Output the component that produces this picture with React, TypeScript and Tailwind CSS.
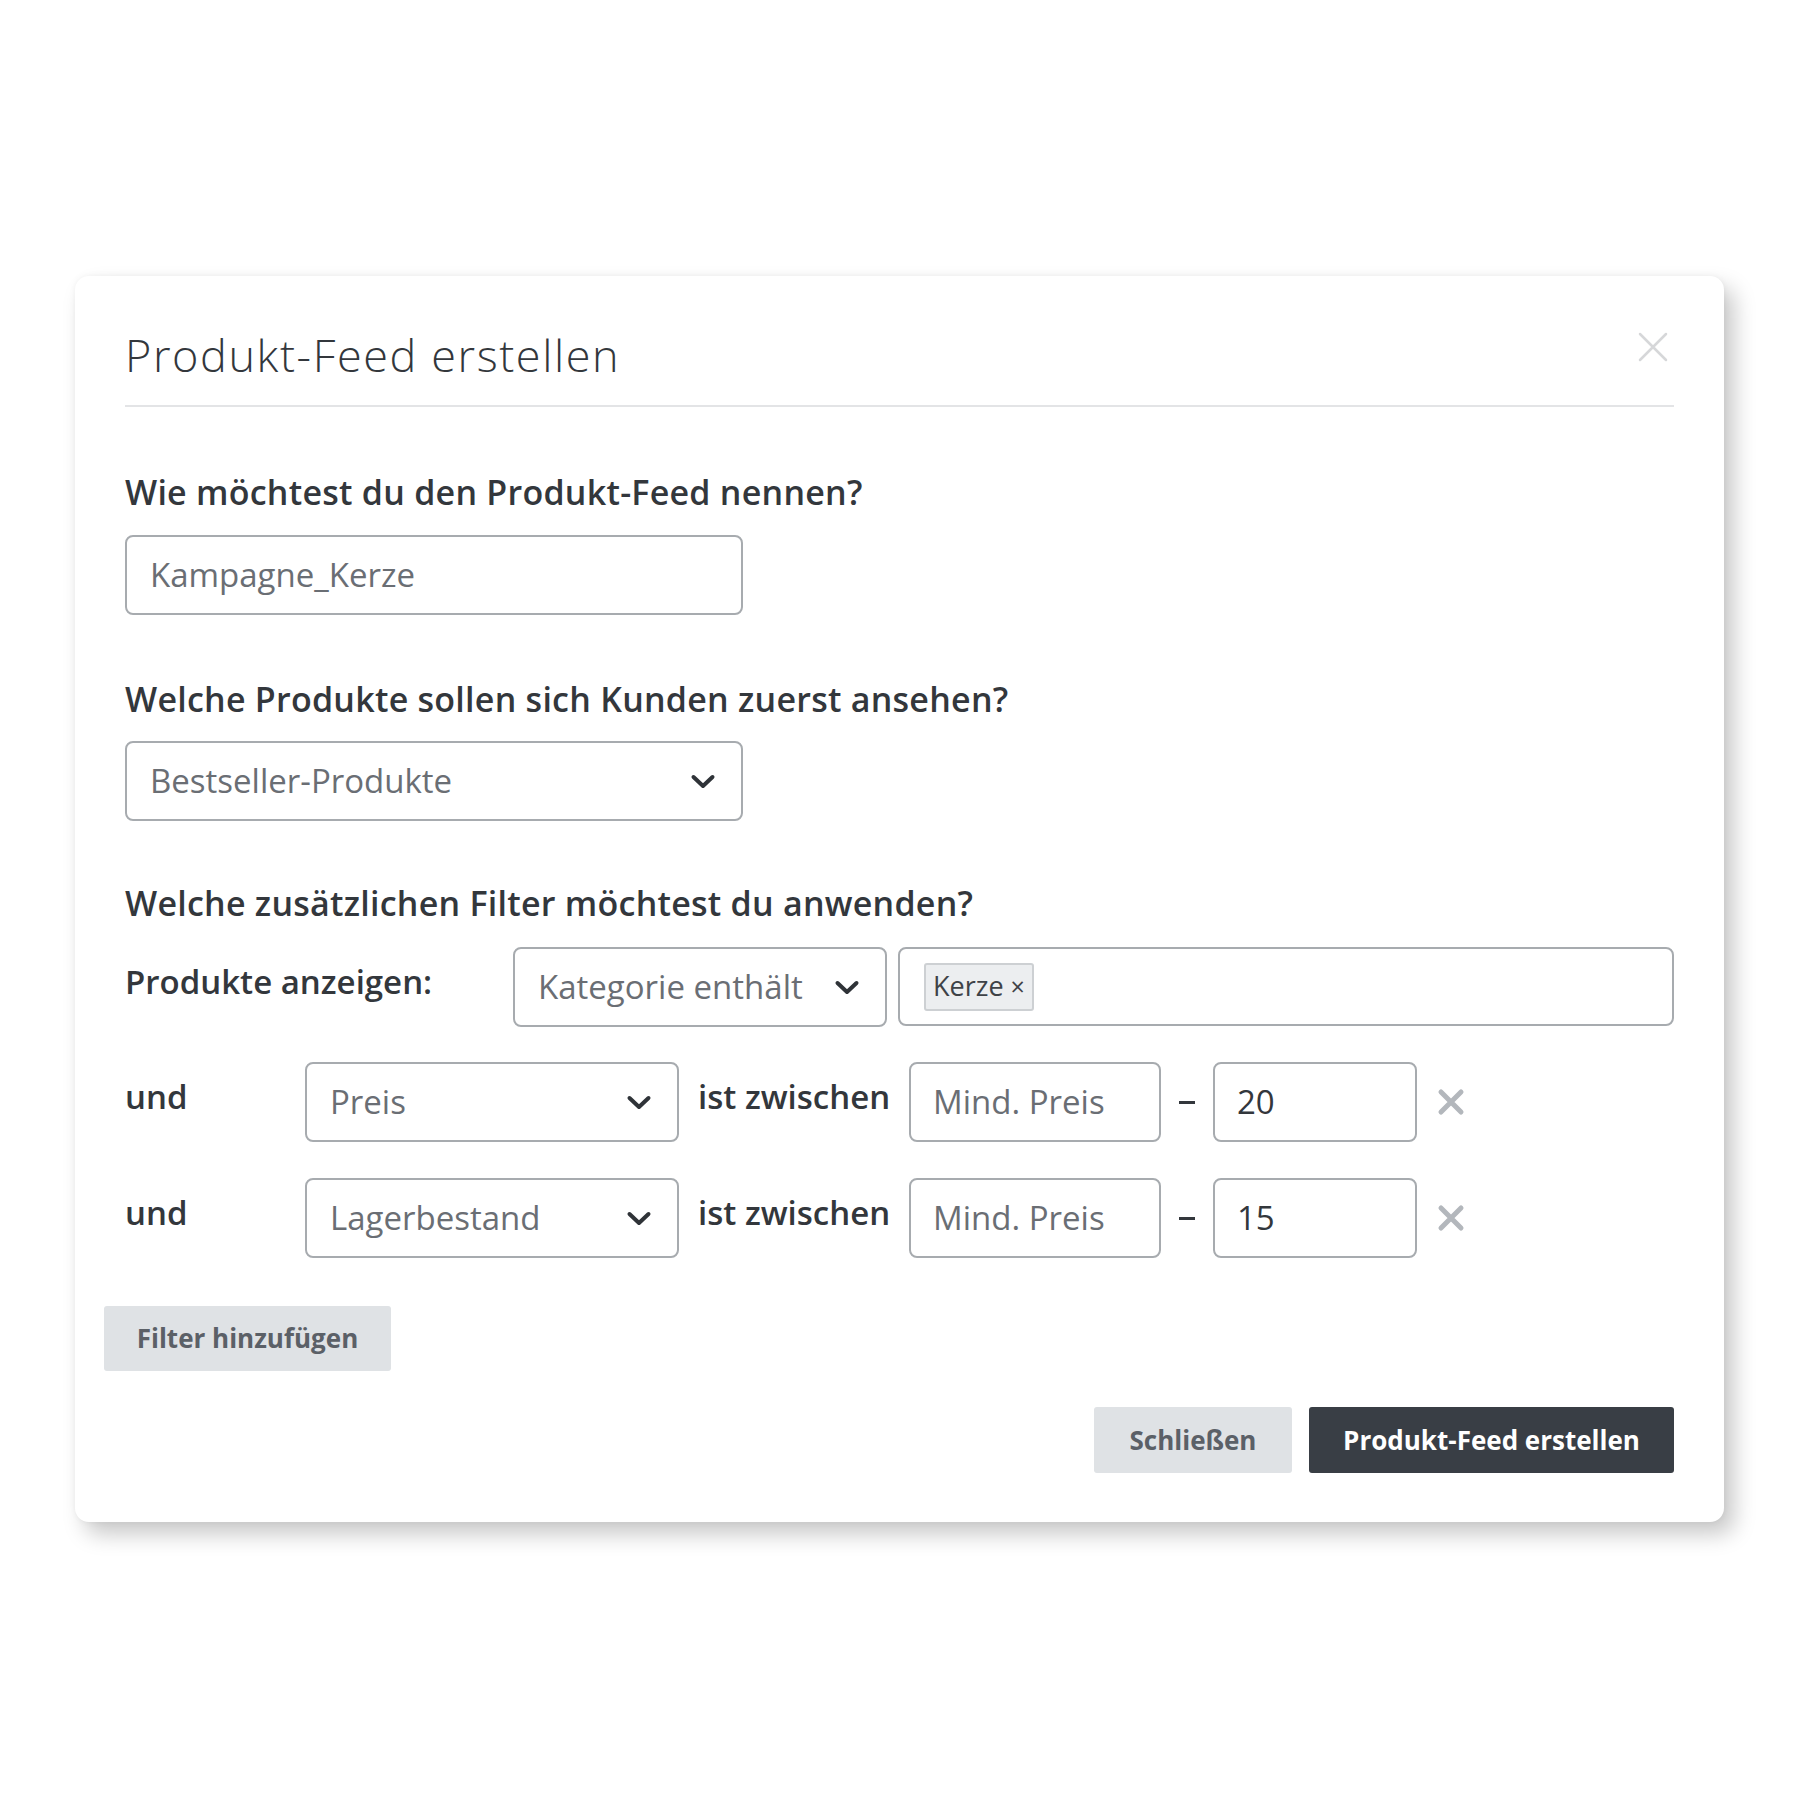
import { useState } from 'react';

const font = { fontFamily: '"Open Sans", Lato, sans-serif' };

function Chevron() {
  return (
    <svg width="26" height="16" viewBox="0 0 26 16" fill="none">
      <path d="M3.5 4l9.5 9 9.5-9" stroke="#2f3338" strokeWidth="4" strokeLinecap="round" strokeLinejoin="round" />
    </svg>
  );
}

function RemoveX() {
  return (
    <svg width="30" height="30" viewBox="0 0 30 30" fill="none">
      <path d="M5 5l20 20M25 5L5 25" stroke="#b3b7bc" strokeWidth="5" strokeLinecap="round" />
    </svg>
  );
}

function SelectBox({ value, width }: { value: string; width: string }) {
  return (
    <div className={`${width} h-[80px] shrink-0 flex items-center justify-between pl-[23px] pr-[25px] border-2 border-[#a7abaf] rounded-[8px] bg-white`}>
      <span className="text-[33px] text-[#6a6e74]">{value}</span>
      <Chevron />
    </div>
  );
}

function RangeRow({ field, max }: { field: string; max: string }) {
  return (
    <div className="flex items-center h-[80px]">
      <span className="w-[180px] text-[33px] font-semibold text-[#33373c] -mt-[10px]">und</span>
      <SelectBox value={field} width="w-[374px]" />
      <span className="ml-[19px] w-[196px] text-[33px] font-semibold text-[#33373c] -mt-[10px] whitespace-nowrap">ist zwischen</span>
      <div className="ml-[15px] w-[252px] h-[80px] flex items-center pl-[22px] border-2 border-[#a7abaf] rounded-[8px] text-[33px] text-[#6a6e74]">
        Mind. Preis
      </div>
      <div className="w-[52px] flex justify-center">
        <div className="w-[16px] h-[3px] bg-[#33373c]" />
      </div>
      <div className="w-[204px] h-[80px] flex items-center pl-[22px] border-2 border-[#a7abaf] rounded-[8px] text-[33px] text-[#33373c]">
        {max}
      </div>
      <button className="ml-[18px] w-[32px] h-[32px] flex items-center justify-center">
        <RemoveX />
      </button>
    </div>
  );
}

export default function App() {
  const [name] = useState('Kampagne_Kerze');

  return (
    <div className="min-h-screen bg-white pt-[276px] pl-[75px]" style={font}>
      <div className="w-[1649px] h-[1246px] bg-white rounded-[14px] shadow-[10px_12px_22px_rgba(0,0,0,0.22),0_0_6px_rgba(0,0,0,0.05)] px-[50px] flex flex-col">
        <div className="flex justify-between items-start pt-[50px] pb-[21px] border-b-2 border-[#e3e4e6]">
          <h1 className="text-[45px] leading-[58px] font-light text-[#33373c] tracking-[1.6px]">Produkt-Feed erstellen</h1>
          <button className="mt-[6px] mr-[6px]">
            <svg width="30" height="30" viewBox="0 0 30 30" fill="none">
              <path d="M2 2l26 26M28 2L2 28" stroke="#d6d7d9" strokeWidth="2.5" strokeLinecap="round" />
            </svg>
          </button>
        </div>

        <h2 className="mt-[65px] text-[34px] leading-[40px] font-semibold text-[#33373c] tracking-[0.25px]">
          Wie möchtest du den Produkt-Feed nennen?
        </h2>
        <div className="mt-[23px] w-[618px] h-[80px] flex items-center pl-[23px] border-2 border-[#a7abaf] rounded-[8px] text-[33px] text-[#6a6e74]">
          {name}
        </div>

        <h2 className="mt-[64px] text-[34px] leading-[40px] font-semibold text-[#33373c] tracking-[0.25px]">
          Welche Produkte sollen sich Kunden zuerst ansehen?
        </h2>
        <div className="mt-[22px]">
          <SelectBox value="Bestseller-Produkte" width="w-[618px]" />
        </div>

        <h2 className="mt-[62px] text-[34px] leading-[40px] font-semibold text-[#33373c] tracking-[0.25px]">
          Welche zusätzlichen Filter möchtest du anwenden?
        </h2>
        <div className="mt-[24px] flex items-center h-[79px]">
          <span className="w-[388px] text-[33px] font-semibold text-[#33373c] -mt-[10px]">Produkte anzeigen:</span>
          <SelectBox value="Kategorie enthält" width="w-[374px]" />
          <div className="ml-[11px] flex-1 h-[79px] flex items-center pl-[24px] border-2 border-[#a7abaf] rounded-[8px]">
            <span className="h-[48px] px-[7px] flex items-center gap-[7px] bg-[#eceef0] border-2 border-[#cdd0d3] rounded-[3px] text-[27px] text-[#3e4247]">
              Kerze <span className="text-[25px]">×</span>
            </span>
          </div>
        </div>

        <div className="mt-[36px] flex flex-col gap-[36px]">
          <RangeRow field="Preis" max="20" />
          <RangeRow field="Lagerbestand" max="15" />
        </div>

        <button className="mt-[48px] -ml-[21px] w-[287px] h-[65px] bg-[#dfe2e5] rounded-[3px] text-[26px] font-bold text-[#5b6067]">
          Filter hinzufügen
        </button>

        <div className="mt-[36px] flex justify-end gap-[17px]">
          <button className="w-[198px] h-[66px] bg-[#dfe2e5] rounded-[3px] text-[26px] font-bold text-[#5b6067]">Schließen</button>
          <button className="w-[365px] h-[66px] bg-[#393e45] rounded-[3px] text-[26px] font-bold text-white">Produkt-Feed erstellen</button>
        </div>
      </div>
    </div>
  );
}
